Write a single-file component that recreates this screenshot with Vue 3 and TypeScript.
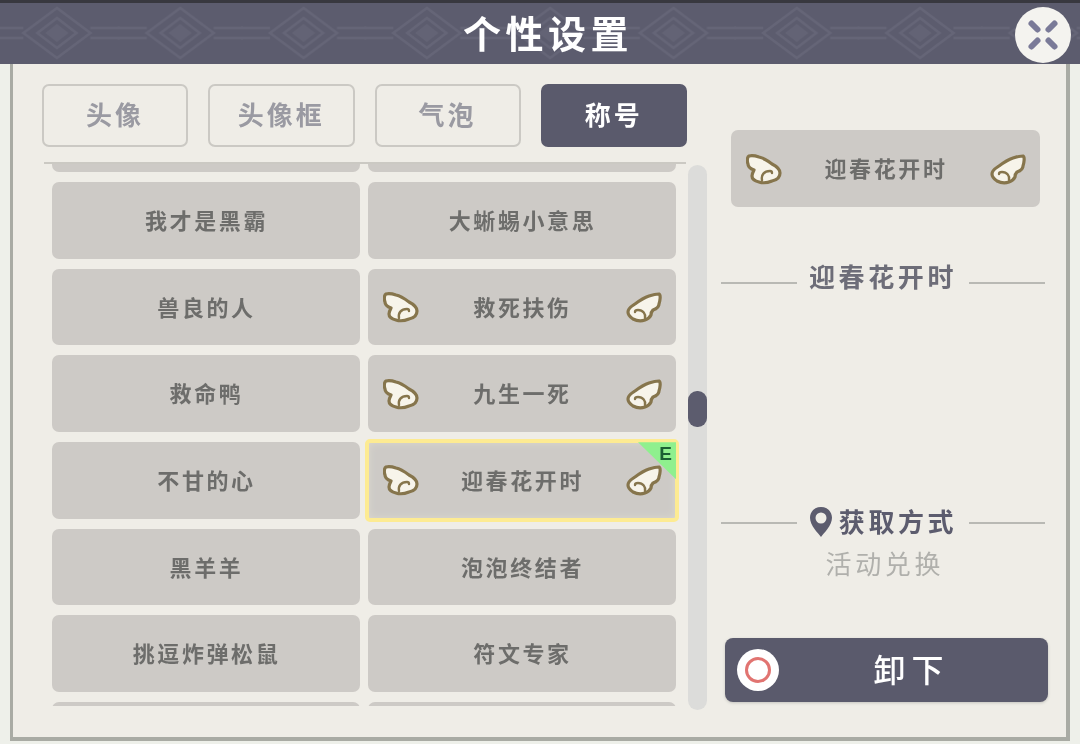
<template>
  <div class="page">
    <svg class="defs" width="0" height="0" aria-hidden="true">
      <symbol id="wing-l" viewBox="0 0 36 32">
        <path class="wing-body" d="M3 3C7 2 10 3 13 4C18 5 22 8 26 11C30 13 34 16 34 20C34 24 31 27 26 28C21 30 16 30 13 29C9 28 6 26 6 23C6 21 7 19 8 17C5 16 2 14 2 11C1 8 1 4 3 3Z" />
        <path class="wing-curl" d="M16 27C15 22 18 18 24 18C25 18 26 19 26 20" />
      </symbol>
      <symbol id="wing-r" viewBox="0 0 36 32">
        <path class="wing-body" d="M33 3C29 3 26 4 23 5C17 7 13 10 9 13C6 15 2 17 2 21C2 24 4 26 7 28C11 30 16 30 19 29C22 28 24 26 25 24C25 22 26 20 27 19C30 18 33 16 33 13C34 10 35 4 33 3Z" />
        <path class="wing-curl" d="M19 27C20 23 17 19 12 19C10 19 9 20 9 21" />
      </symbol>
      <pattern id="band" width="123.3" height="64" patternUnits="userSpaceOnUse" x="-4.6">
        <g class="band-line">
          <path d="M61.6 8L95 33L61.6 58L28 33Z" />
          <path d="M61.6 18L81 33L61.6 48L42 33Z" />
          <path d="M95 28H123.3M95 38H123.3M0 28H28M0 38H28" />
          <path d="M0 28L-10 16M0 38L-10 50M123.3 28L134 16M123.3 38L134 50" />
        </g>
        <path class="band-core" d="M61.6 24L73 33L61.6 42L50 33Z" />
      </pattern>
    </svg>

    <header class="top">
      <svg class="band" width="100%" height="64" aria-hidden="true">
        <rect width="100%" height="64" fill="url(#band)" />
      </svg>
      <h1 class="title">个性设置</h1>
      <button class="close" type="button" aria-label="关闭">
        <svg width="34" height="34" viewBox="0 0 34 34">
          <path d="M11.5 11.5L5.5 5.5M22.5 11.5L28.5 5.5M11.5 22.5L5.5 28.5M22.5 22.5L28.5 28.5" />
        </svg>
      </button>
    </header>

    <main class="frame">
      <section class="left">
        <nav class="tabs">
          <button
            v-for="tab in tabs"
            :key="tab"
            type="button"
            class="tab"
            :class="{ active: tab === activeTab }"
            @click="activeTab = tab"
          >
            <span class="tab-text">{{ tab }}</span>
          </button>
        </nav>

        <div class="list-row">
          <div class="list">
            <div class="cards">
              <div
                v-for="(card, index) in cards"
                :key="index"
                class="card"
                :class="{ selected: card.name === selected }"
              >
                <svg v-if="card.wings" class="wing"><use href="#wing-l" /></svg>
                <span class="card-name">{{ card.name }}</span>
                <svg v-if="card.wings" class="wing"><use href="#wing-r" /></svg>
                <span v-if="card.name === selected" class="equipped">E</span>
              </div>
            </div>
          </div>
          <div class="scrollbar"><div class="thumb" /></div>
        </div>
      </section>

      <aside class="right">
        <div class="preview">
          <svg class="wing"><use href="#wing-l" /></svg>
          <span class="card-name">{{ selected }}</span>
          <svg class="wing"><use href="#wing-r" /></svg>
        </div>

        <div class="heading name-heading">
          <i class="rule" />
          <span>{{ selected }}</span>
          <i class="rule" />
        </div>

        <div class="heading source-heading">
          <i class="rule" />
          <span class="source-label">
            <svg width="24" height="32" viewBox="0 0 24 32">
              <path fill-rule="evenodd" d="M12 1C5.6 1 1 5.7 1 11.8C1 19.5 9 27 12 31C15 27 23 19.5 23 11.8C23 5.7 18.4 1 12 1ZM12 6.5A5.5 5.5 0 1 1 12 17.5A5.5 5.5 0 1 1 12 6.5Z" />
            </svg>
            获取方式
          </span>
          <i class="rule" />
        </div>
        <p class="source">活动兑换</p>

        <button class="unload" type="button">
          <span class="unload-icon"><i /></span>
          <span class="unload-text">卸下</span>
        </button>
      </aside>
    </main>
  </div>
</template>

<script setup lang="ts">
  import { ref } from 'vue'

  type Card = { name: string, wings?: boolean }

  const tabs = ['头像', '头像框', '气泡', '称号']
  const activeTab = ref('称号')
  const selected = '迎春花开时'

  const cards: Card[] = [
    { name: '' },
    { name: '' },
    { name: '我才是黑霸' },
    { name: '大蜥蜴小意思' },
    { name: '兽良的人' },
    { name: '救死扶伤', wings: true },
    { name: '救命鸭' },
    { name: '九生一死', wings: true },
    { name: '不甘的心' },
    { name: '迎春花开时', wings: true },
    { name: '黑羊羊' },
    { name: '泡泡终结者' },
    { name: '挑逗炸弹松鼠' },
    { name: '符文专家' },
    { name: '' },
    { name: '' },
  ]
</script>

<style>
html, body {
  margin: 0;
  background: #eef0ea;
}
</style>

<style scoped>
.page {
  position: relative;
  width: 1080px;
  height: 744px;
  overflow: hidden;
  display: flex;
  flex-direction: column;
  background: #eef0ea;
  font-family: "Noto Sans CJK SC", "Liberation Sans", sans-serif;
  filter: blur(0.6px);
}

.defs {
  position: absolute;
}

.band-line path {
  fill: none;
  stroke: #656577;
  stroke-width: 2.5;
}

.band-core {
  fill: #636375;
}

.wing-body {
  fill: #f7f4ea;
  stroke: #86754c;
  stroke-width: 3.2;
  stroke-linejoin: round;
}

.wing-curl {
  fill: none;
  stroke: #86754c;
  stroke-width: 2.4;
  stroke-linecap: round;
}

.top {
  position: relative;
  flex: none;
  height: 64px;
  display: flex;
  align-items: center;
  justify-content: center;
  padding-left: 16px;
  box-sizing: border-box;
  background: #5c5c6e;
  border-top: 3px solid #38383f;
}

.band {
  position: absolute;
  left: 0;
  top: -3px;
}

.title {
  position: relative;
  margin: 0 0 3px;
  color: #fff;
  font-size: 38px;
  font-weight: 700;
  letter-spacing: 4.5px;
  line-height: 1;
}

.close {
  position: absolute;
  left: 1015px;
  top: 4px;
  width: 56px;
  height: 56px;
  padding: 0;
  border: none;
  border-radius: 50%;
  display: flex;
  align-items: center;
  justify-content: center;
  background: #f4f3ef;
}

.close path {
  fill: none;
  stroke: #7a7a98;
  stroke-width: 6;
  stroke-linecap: round;
}

.frame {
  flex: none;
  height: 677px;
  margin: 0 10px;
  box-sizing: border-box;
  display: flex;
  border: solid #a9aba4;
  border-width: 0 4px 4px 3px;
  background: #efede7;
}

.left {
  width: 694px;
  flex: none;
  box-sizing: border-box;
  padding: 20px 0 0 29px;
}

.tabs {
  width: 645px;
  display: grid;
  grid-template-columns: repeat(4, 1fr);
  gap: 20px;
}

.tab {
  height: 63px;
  padding: 0;
  box-sizing: border-box;
  border: 2px solid #cbc9c4;
  border-radius: 7px;
  background: transparent;
  color: #9a9aa2;
  font: 700 26px "Noto Sans CJK SC", sans-serif;
  letter-spacing: 3px;
}

.tab-text {
  display: block;
  margin-top: -4px;
}

.tab.active {
  border-color: #5a5a6c;
  background: #5a5a6c;
  color: #fff;
}

.list-row {
  display: flex;
  margin-top: 15px;
  margin-left: 2px;
}

.list {
  width: 642px;
  height: 544px;
  overflow: hidden;
  border-top: 2px solid #cbc9c3;
  box-sizing: border-box;
  padding-left: 8px;
}

.cards {
  margin-top: -68.5px;
  width: 624px;
  display: grid;
  grid-template-columns: 308px 308px;
  grid-auto-rows: 76.67px;
  gap: 10px 8px;
}

.card,
.preview {
  position: relative;
  box-sizing: border-box;
  display: flex;
  align-items: center;
  justify-content: center;
  padding: 0 14px 0 15px;
  border-radius: 7px;
  background: #cdcac6;
}

.card-name {
  flex: 1;
  margin-top: -3px;
  text-align: center;
  color: #6d6d6b;
  font-size: 22px;
  font-weight: 700;
  letter-spacing: 2.6px;
}

.wing {
  flex: none;
  width: 36px;
  height: 32px;
}

.card.selected {
  outline: 4px solid #fdeb92;
  outline-offset: -1px;
  border-radius: 2px;
  box-shadow: inset 0 0 8px #dedbd0;
}

.equipped {
  position: absolute;
  top: 0;
  right: 0;
  width: 38px;
  height: 37px;
  box-sizing: border-box;
  padding: 3px 4px 0 0;
  text-align: right;
  background: #8ff08e;
  clip-path: polygon(0 0, 100% 0, 100% 100%);
  color: #1a5f33;
  font: 700 19px/18px "Liberation Sans", sans-serif;
}

.scrollbar {
  position: relative;
  width: 19px;
  height: 545px;
  margin: 3px 0 0 2px;
  border-radius: 10px;
  background: #dcdcda;
}

.thumb {
  position: absolute;
  top: 226px;
  left: 0;
  width: 19px;
  height: 36px;
  border-radius: 9px;
  background: #5c5c6e;
}

.right {
  flex: 1;
  min-width: 0;
  display: flex;
  flex-direction: column;
  padding-left: 14px;
}

.preview {
  width: 309px;
  height: 77px;
  margin: 66px 0 0 10px;
}

.heading {
  width: 324px;
  display: flex;
  align-items: center;
  gap: 12px;
  color: #6d6d78;
  font-size: 26px;
  font-weight: 700;
  letter-spacing: 3.6px;
  line-height: 36px;
}

.name-heading {
  margin-top: 51px;
}

.source-heading {
  margin-top: 209px;
  color: #5c5c6e;
}

.rule {
  flex: 1;
  height: 2px;
  margin-top: 4px;
  background: #b9b9b4;
}

.name-heading .rule {
  margin-top: 14px;
}

.source-label {
  display: flex;
  align-items: center;
  gap: 6px;
}

.source-label svg {
  margin-top: 2px;
  fill: #5c5c6e;
}

.source {
  width: 324px;
  margin: 6px 0 0;
  text-align: center;
  text-indent: 3.6px;
  color: #b0b0ac;
  font-size: 26px;
  letter-spacing: 3.6px;
  line-height: 36px;
}

.unload {
  position: relative;
  width: 323px;
  height: 64px;
  margin: 57px 0 0 4px;
  padding: 0 0 0 50px;
  border: none;
  border-radius: 8px;
  background: #5a5a6c;
  box-shadow: 0 1px 3px #c4c3be;
  color: #fff;
  font: 500 32px "Noto Sans CJK SC", sans-serif;
  letter-spacing: 6px;
}

.unload-text {
  display: block;
  margin-top: -4px;
}

.unload-icon {
  position: absolute;
  left: 12px;
  top: 11px;
  width: 42px;
  height: 42px;
  border-radius: 50%;
  display: flex;
  align-items: center;
  justify-content: center;
  background: #fff;
}

.unload-icon i {
  width: 26px;
  height: 26px;
  box-sizing: border-box;
  border: 3px solid #e17471;
  border-radius: 50%;
}
</style>
